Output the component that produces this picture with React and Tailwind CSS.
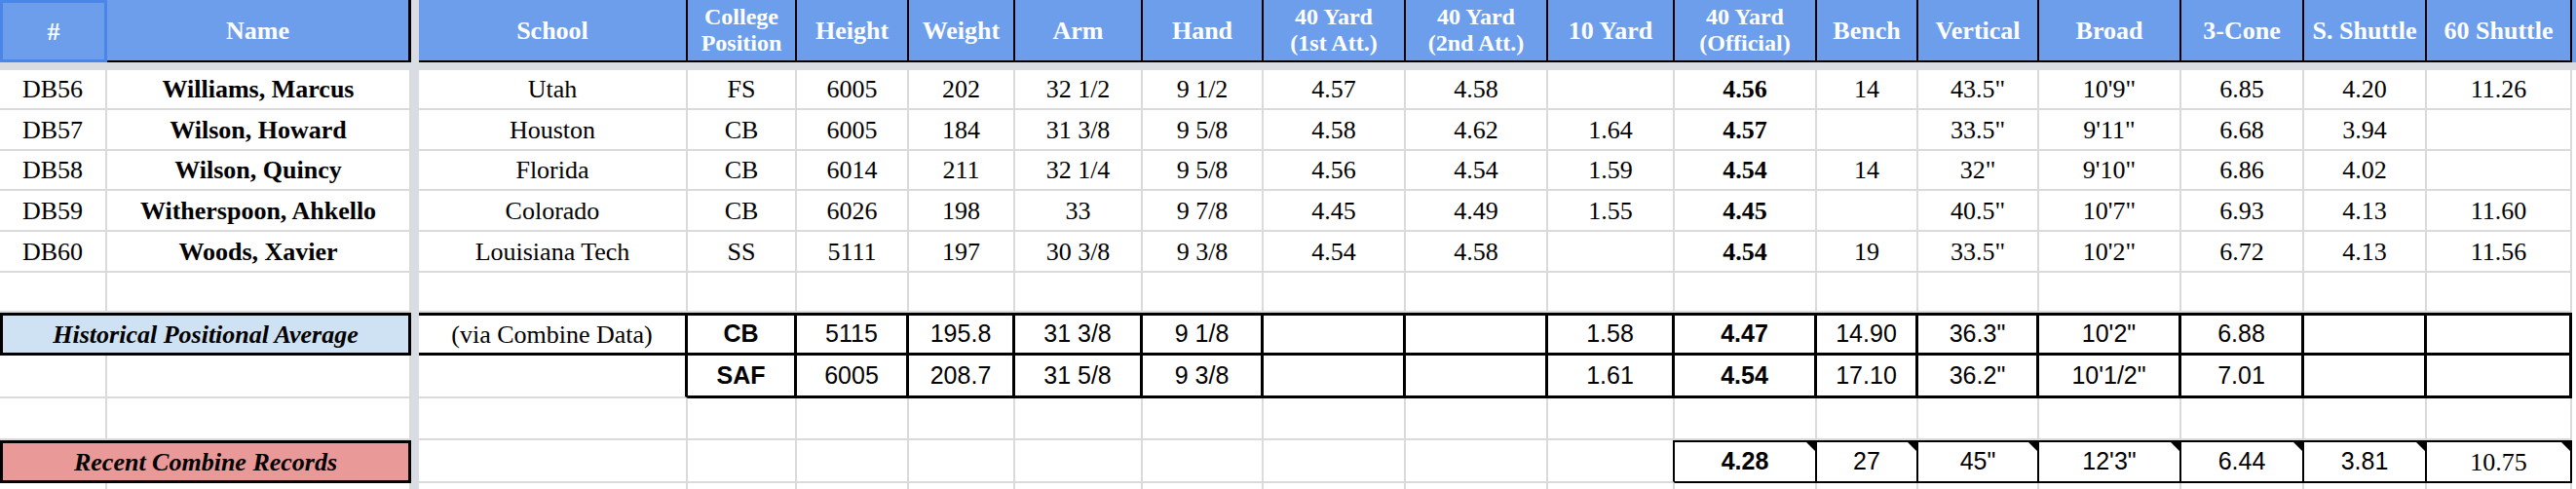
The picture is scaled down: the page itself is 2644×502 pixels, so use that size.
import React from "react";

const G = "border-r-2 border-b-2 border-[#dadada]";
const SERIF = "font-['Liberation_Serif','Times_New_Roman',serif]";
const SANS = "font-['Liberation_Sans',Arial,sans-serif]";

const RC = [
  { k: "school", w: "w-[276px]", h: ["School"] },
  { k: "cp", w: "w-[112px]", h: ["College", "Position"] },
  { k: "height", w: "w-[115px]", h: ["Height"] },
  { k: "weight", w: "w-[109px]", h: ["Weight"] },
  { k: "arm", w: "w-[131px]", h: ["Arm"] },
  { k: "hand", w: "w-[124px]", h: ["Hand"] },
  { k: "y1", w: "w-[146px]", h: ["40 Yard", "(1st Att.)"] },
  { k: "y2", w: "w-[146px]", h: ["40 Yard", "(2nd Att.)"] },
  { k: "ten", w: "w-[130px]", h: ["10 Yard"] },
  { k: "off", w: "w-[146px]", h: ["40 Yard", "(Official)"] },
  { k: "bench", w: "w-[104px]", h: ["Bench"] },
  { k: "vert", w: "w-[124px]", h: ["Vertical"] },
  { k: "broad", w: "w-[146px]", h: ["Broad"] },
  { k: "cone", w: "w-[126px]", h: ["3-Cone"] },
  { k: "ss", w: "w-[126px]", h: ["S. Shuttle"] },
  { k: "sixty", w: "w-[149px]", h: ["60 Shuttle"] },
];

const players = [
  ["DB56", "Williams, Marcus", "Utah", "FS", "6005", "202", "32 1/2", "9 1/2", "4.57", "4.58", "", "4.56", "14", '43.5"', `10'9"`, "6.85", "4.20", "11.26"],
  ["DB57", "Wilson, Howard", "Houston", "CB", "6005", "184", "31 3/8", "9 5/8", "4.58", "4.62", "1.64", "4.57", "", '33.5"', `9'11"`, "6.68", "3.94", ""],
  ["DB58", "Wilson, Quincy", "Florida", "CB", "6014", "211", "32 1/4", "9 5/8", "4.56", "4.54", "1.59", "4.54", "14", '32"', `9'10"`, "6.86", "4.02", ""],
  ["DB59", "Witherspoon, Ahkello", "Colorado", "CB", "6026", "198", "33", "9 7/8", "4.45", "4.49", "1.55", "4.45", "", '40.5"', `10'7"`, "6.93", "4.13", "11.60"],
  ["DB60", "Woods, Xavier", "Louisiana Tech", "SS", "5111", "197", "30 3/8", "9 3/8", "4.54", "4.58", "", "4.54", "19", '33.5"', `10'2"`, "6.72", "4.13", "11.56"],
];

const rowHeights = ["h-[41px]", "h-[42px]", "h-[41px]", "h-[42px]", "h-[42px]"];

const cb = ["CB", "5115", "195.8", "31 3/8", "9 1/8", "", "", "1.58", "4.47", "14.90", '36.3"', `10'2"`, "6.88", "", ""];
const saf = ["SAF", "6005", "208.7", "31 5/8", "9 3/8", "", "", "1.61", "4.54", "17.10", '36.2"', `10'1/2"`, "7.01", "", ""];
const recent = ["4.28", "27", '45"', `12'3"`, "6.44", "3.81", "10.75"];

function Cell({ w, b = G, className = "", children, tri }) {
  return (
    <div className={`relative flex h-full shrink-0 items-center justify-center ${w} ${b} ${className}`}>
      {children}
      {tri && (
        <svg className="absolute right-0 top-0 h-[9px] w-[9px]" viewBox="0 0 9 9">
          <polygon points="0,0 9,0 9,9" fill="#000" />
        </svg>
      )}
    </div>
  );
}

function Divider() {
  return <div className="h-full w-[8px] shrink-0 bg-[#d9dce3]" />;
}

function Extra({ header }) {
  return <div className={`h-full w-[4px] shrink-0 ${header ? "bg-[#6d9eeb]" : "bg-white"}`} />;
}

function Header() {
  return (
    <div className={`flex h-[64px] ${SERIF} font-bold text-white`}>
      <Cell w="w-[110px]" b="border-[3px] border-[#4a86e8]" className="bg-[#6d9eeb] text-[26px]">
        #
      </Cell>
      <Cell w="w-[312px]" b="border-r-[3px] border-b-2 border-black" className="bg-[#6d9eeb] text-[26px]">
        Name
      </Cell>
      <Divider />
      {RC.map((c) => (
        <Cell
          key={c.k}
          w={c.w}
          b="border-r-2 border-b-2 border-black"
          className={`bg-[#6d9eeb] text-center ${c.h.length > 1 ? "text-[24px] leading-[27px]" : "text-[26px]"}`}
        >
          {c.h.length > 1 ? (
            <span>
              {c.h[0]}
              <br />
              {c.h[1]}
            </span>
          ) : (
            c.h[0]
          )}
        </Cell>
      ))}
      <Extra header />
    </div>
  );
}

function PlayerRow({ p, h }) {
  return (
    <div className={`flex ${h} ${SERIF} text-[26px] text-black`}>
      <Cell w="w-[110px]">{p[0]}</Cell>
      <Cell w="w-[312px]" className="font-bold">
        {p[1]}
      </Cell>
      <Divider />
      {RC.map((c, i) => (
        <Cell key={c.k} w={c.w} className={c.k === "off" ? "font-bold" : ""}>
          {p[i + 2]}
        </Cell>
      ))}
      <Extra />
    </div>
  );
}

function EmptyRow({ h }) {
  return (
    <div className={`flex ${h}`}>
      <Cell w="w-[110px]" />
      <Cell w="w-[312px]" />
      <Divider />
      {RC.map((c) => (
        <Cell key={c.k} w={c.w} />
      ))}
      <Extra />
    </div>
  );
}

function HistRow() {
  return (
    <div className={`flex h-[44px] text-black`}>
      <Cell
        w="w-[422px]"
        b="border-[3px] border-black"
        className={`bg-[#cfe2f3] ${SERIF} text-[26px] font-bold italic`}
      >
        Historical Positional Average
      </Cell>
      <Divider />
      <Cell w="w-[276px]" b="border-t-[3px] border-b-[3px] border-r-[3px] border-black" className={`${SERIF} text-[26px]`}>
        (via Combine Data)
      </Cell>
      {RC.slice(1).map((c, i) => (
        <Cell
          key={c.k}
          w={c.w}
          b="border-t-[3px] border-r-[3px] border-b-[3px] border-black"
          className={`${SANS} text-[25px] ${i === 0 || c.k === "off" ? "font-bold" : ""}`}
        >
          {cb[i]}
        </Cell>
      ))}
      <Extra />
    </div>
  );
}

function SafRow() {
  return (
    <div className={`flex h-[44px] text-black`}>
      <Cell w="w-[110px]" />
      <Cell w="w-[312px]" />
      <Divider />
      <Cell w="w-[276px]" b="border-r-[3px] border-r-black border-b-2 border-b-[#dadada]" />
      {RC.slice(1).map((c, i) => (
        <Cell
          key={c.k}
          w={c.w}
          b="border-r-[3px] border-b-[3px] border-black"
          className={`${SANS} text-[25px] ${i === 0 || c.k === "off" ? "font-bold" : ""}`}
        >
          {saf[i]}
        </Cell>
      ))}
      <Extra />
    </div>
  );
}

function RecentRow() {
  const idxOff = RC.findIndex((c) => c.k === "off");
  return (
    <div className={`flex h-[44px] text-black`}>
      <Cell
        w="w-[422px]"
        b="border-[3px] border-black"
        className={`bg-[#ea9999] ${SERIF} text-[26px] font-bold italic`}
      >
        Recent Combine Records
      </Cell>
      <Divider />
      {RC.map((c, i) => {
        if (i < idxOff - 1) return <Cell key={c.k} w={c.w} />;
        if (i === idxOff - 1)
          return <Cell key={c.k} w={c.w} b="border-r-2 border-r-black border-b-2 border-b-[#dadada]" />;
        const v = recent[i - idxOff];
        const isLast = c.k === "sixty";
        return (
          <Cell
            key={c.k}
            w={c.w}
            b="border-t-2 border-r-2 border-b-2 border-black"
            tri
            className={`${isLast ? `${SERIF} text-[26px]` : `${SANS} text-[25px]`} ${c.k === "off" ? "font-bold" : ""}`}
          >
            {v}
          </Cell>
        );
      })}
      <Extra />
    </div>
  );
}

function TailRow() {
  return (
    <div className="flex h-[6px]">
      <Cell w="w-[110px]" b="border-r-2 border-[#dadada]" />
      <Cell w="w-[312px]" b="border-r-2 border-[#dadada]" />
      <Divider />
      {RC.map((c) => (
        <Cell key={c.k} w={c.w} b="border-r-2 border-[#dadada]" />
      ))}
      <Extra />
    </div>
  );
}

export default function App() {
  return (
    <div className="h-[502px] w-[2644px] overflow-hidden bg-white">
      <Header />
      <div className="h-[8px] w-full bg-[#d9dce3]" />
      {players.map((p, i) => (
        <PlayerRow key={p[0]} p={p} h={rowHeights[i]} />
      ))}
      <EmptyRow h="h-[41px]" />
      <HistRow />
      <SafRow />
      <EmptyRow h="h-[43px]" />
      <RecentRow />
      <TailRow />
    </div>
  );
}
